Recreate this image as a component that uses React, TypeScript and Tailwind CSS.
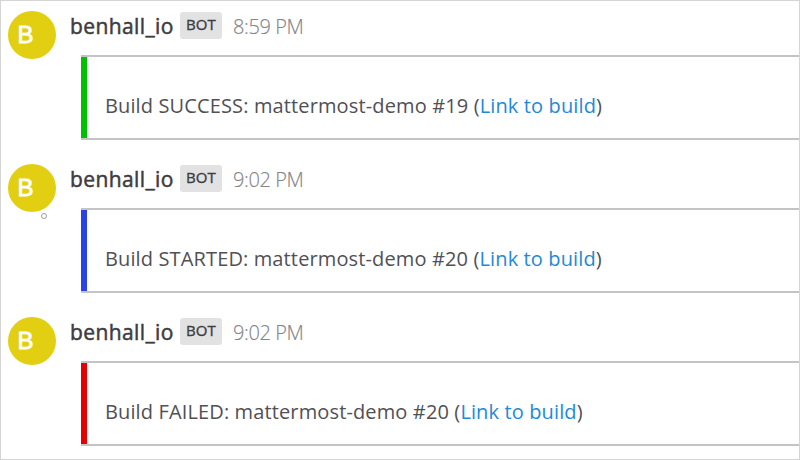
const posts = [
  { time: "8:59 PM", text: "Build SUCCESS: mattermost-demo #19 (", bar: "bg-[#00c100]", dot: false },
  { time: "9:02 PM", text: "Build STARTED: mattermost-demo #20 (", bar: "bg-[#2a43e8]", dot: true },
  { time: "9:02 PM", text: "Build FAILED: mattermost-demo #20 (", bar: "bg-[#e80000]", dot: false },
];

export default function App() {
  return (
    <div className="h-[460px] w-[800px] overflow-hidden border border-[#d5d5d5] bg-white pt-[10px] pl-[7px] font-['Open_Sans',sans-serif] text-[#3d3c40]">
      {posts.map((p, i) => (
        <article key={i} className="flex h-[153px] gap-[14px]">
          <div className="relative flex size-12 shrink-0 items-center rounded-full bg-[#e2cf12] pl-[9.5px] font-['Liberation_Sans',sans-serif] text-[24px] text-white [-webkit-text-stroke:0.8px_white]">
            B
            {p.dot && <span className="absolute top-[49px] left-[33px] size-[6px] rounded-full border border-[#9b9bab]" />}
          </div>
          <div className="min-w-0 flex-1">
            <header className="flex h-[28px] items-center whitespace-nowrap">
              <span className="w-[110px] pt-[3px] text-[21px] tracking-[0.4px] [-webkit-text-stroke:0.5px_#3d3c40]">benhall_io</span>
              <span className="flex h-[27px] w-[42px] items-center justify-center rounded-[3px] bg-[#e2e2e2] pb-[2px] text-[15px] tracking-[0.1px] [-webkit-text-stroke:0.35px_#3d3c40]">BOT</span>
              <span className="ml-[11px] pt-[3px] text-[20px] font-light tracking-[-0.4px] text-[#858588] [-webkit-text-stroke:0.15px_#858588]">{p.time}</span>
            </header>
            <section className="mt-[16px] ml-[11px] flex h-[85px] border-y-2 border-[#c4c4c4]">
              <div className={`w-[6px] ${p.bar}`} />
              <p className="pt-[35px] pl-[18px] text-[20px] leading-[27px] tracking-[0.13px] whitespace-nowrap text-[#515055]">
                {p.text}<a className="text-[#2389d7]">Link to build</a>)
              </p>
            </section>
          </div>
        </article>
      ))}
    </div>
  );
}
